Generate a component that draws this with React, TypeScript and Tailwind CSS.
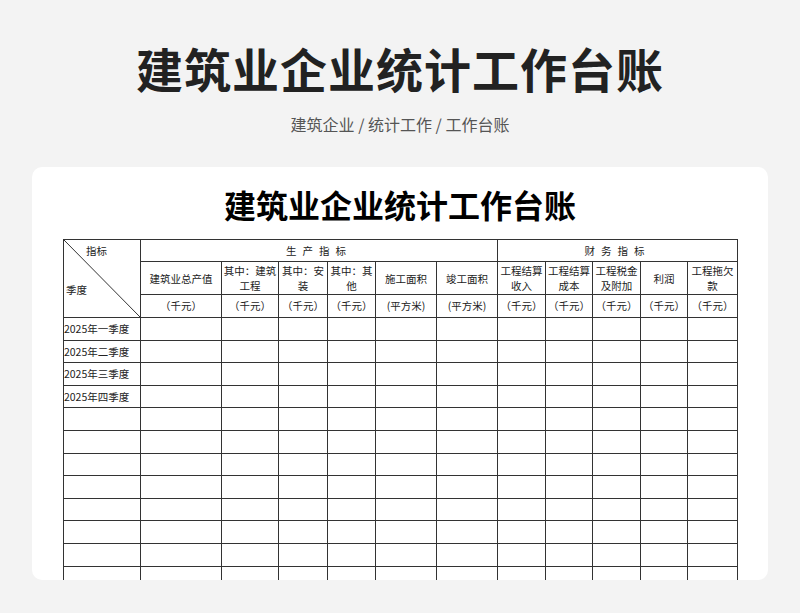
export default function App() {
  const cols = [77, 81, 57, 49, 48, 61, 61, 48, 47, 48, 47, 50];
  const sub = [
    "建筑业总产值", "其中：建筑工程", "其中：安装", "其中：其他", "施工面积", "竣工面积",
    "工程结算收入", "工程结算成本", "工程税金及附加", "利润", "工程拖欠款",
  ];
  const units = ["（千元）", "（千元）", "（千元）", "（千元）", "(平方米)", "(平方米)", "（千元）", "（千元）", "（千元）", "（千元）", "（千元）"];
  const rows = ["2025年一季度", "2025年二季度", "2025年三季度", "2025年四季度", "", "", "", "", "", "", "", ""];
  const td = "border border-[#333] p-0";
  return (
    <div className="w-[800px] h-[613px] bg-[#f3f3f3] flex flex-col items-center overflow-hidden" style={{ fontFamily: '"Noto Sans CJK SC", sans-serif' }}>
      <h1 className="mt-[40px] text-[47px] leading-[56px] font-bold text-[#222] tracking-[1px]">建筑业企业统计工作台账</h1>
      <p className="mt-[16px] text-[16px] leading-[24px] text-[#555]">建筑企业 / 统计工作 / 工作台账</p>
      <div className="mt-[31px] w-[736px] h-[413px] bg-white rounded-[10px] overflow-hidden flex flex-col items-center">
        <h2 className="mt-[17px] text-[32px] leading-[40px] font-bold text-black">建筑业企业统计工作台账</h2>
        <table className="mt-[15px] ml-[1px] border-collapse table-fixed text-[10.5px] text-[#222] text-center" style={{ width: 674 }}>
          <colgroup>
            {cols.map((w, i) => <col key={i} style={{ width: w }} />)}
          </colgroup>
          <tbody>
            <tr className="h-[22px]">
              <td rowSpan={3} className={td + " relative"}>
                <svg className="absolute inset-0 w-full h-full" preserveAspectRatio="none" viewBox="0 0 100 100">
                  <line x1="0" y1="0" x2="100" y2="100" stroke="#333" strokeWidth="1" vectorEffect="non-scaling-stroke" />
                </svg>
                <span className="absolute top-[3px] left-[22px]">指标</span>
                <span className="absolute top-[42px] left-[2px]">季度</span>
              </td>
              <td colSpan={6} className={td + " tracking-[6px]"}>生产指标</td>
              <td colSpan={5} className={td + " tracking-[6px]"}>财务指标</td>
            </tr>
            <tr className="h-[33px]">
              {sub.map((s, i) => <td key={i} className={td + " leading-[15px] px-[1px]"}>{s}</td>)}
            </tr>
            <tr className="h-[23px]">
              {units.map((s, i) => <td key={i} className={td}>{s}</td>)}
            </tr>
            {rows.map((r, i) => (
              <tr key={i} className="h-[22.6px]">
                <td className={td + " text-left whitespace-nowrap"}>{r}</td>
                {sub.map((_, j) => <td key={j} className={td}></td>)}
              </tr>
            ))}
          </tbody>
        </table>
      </div>
    </div>
  );
}
